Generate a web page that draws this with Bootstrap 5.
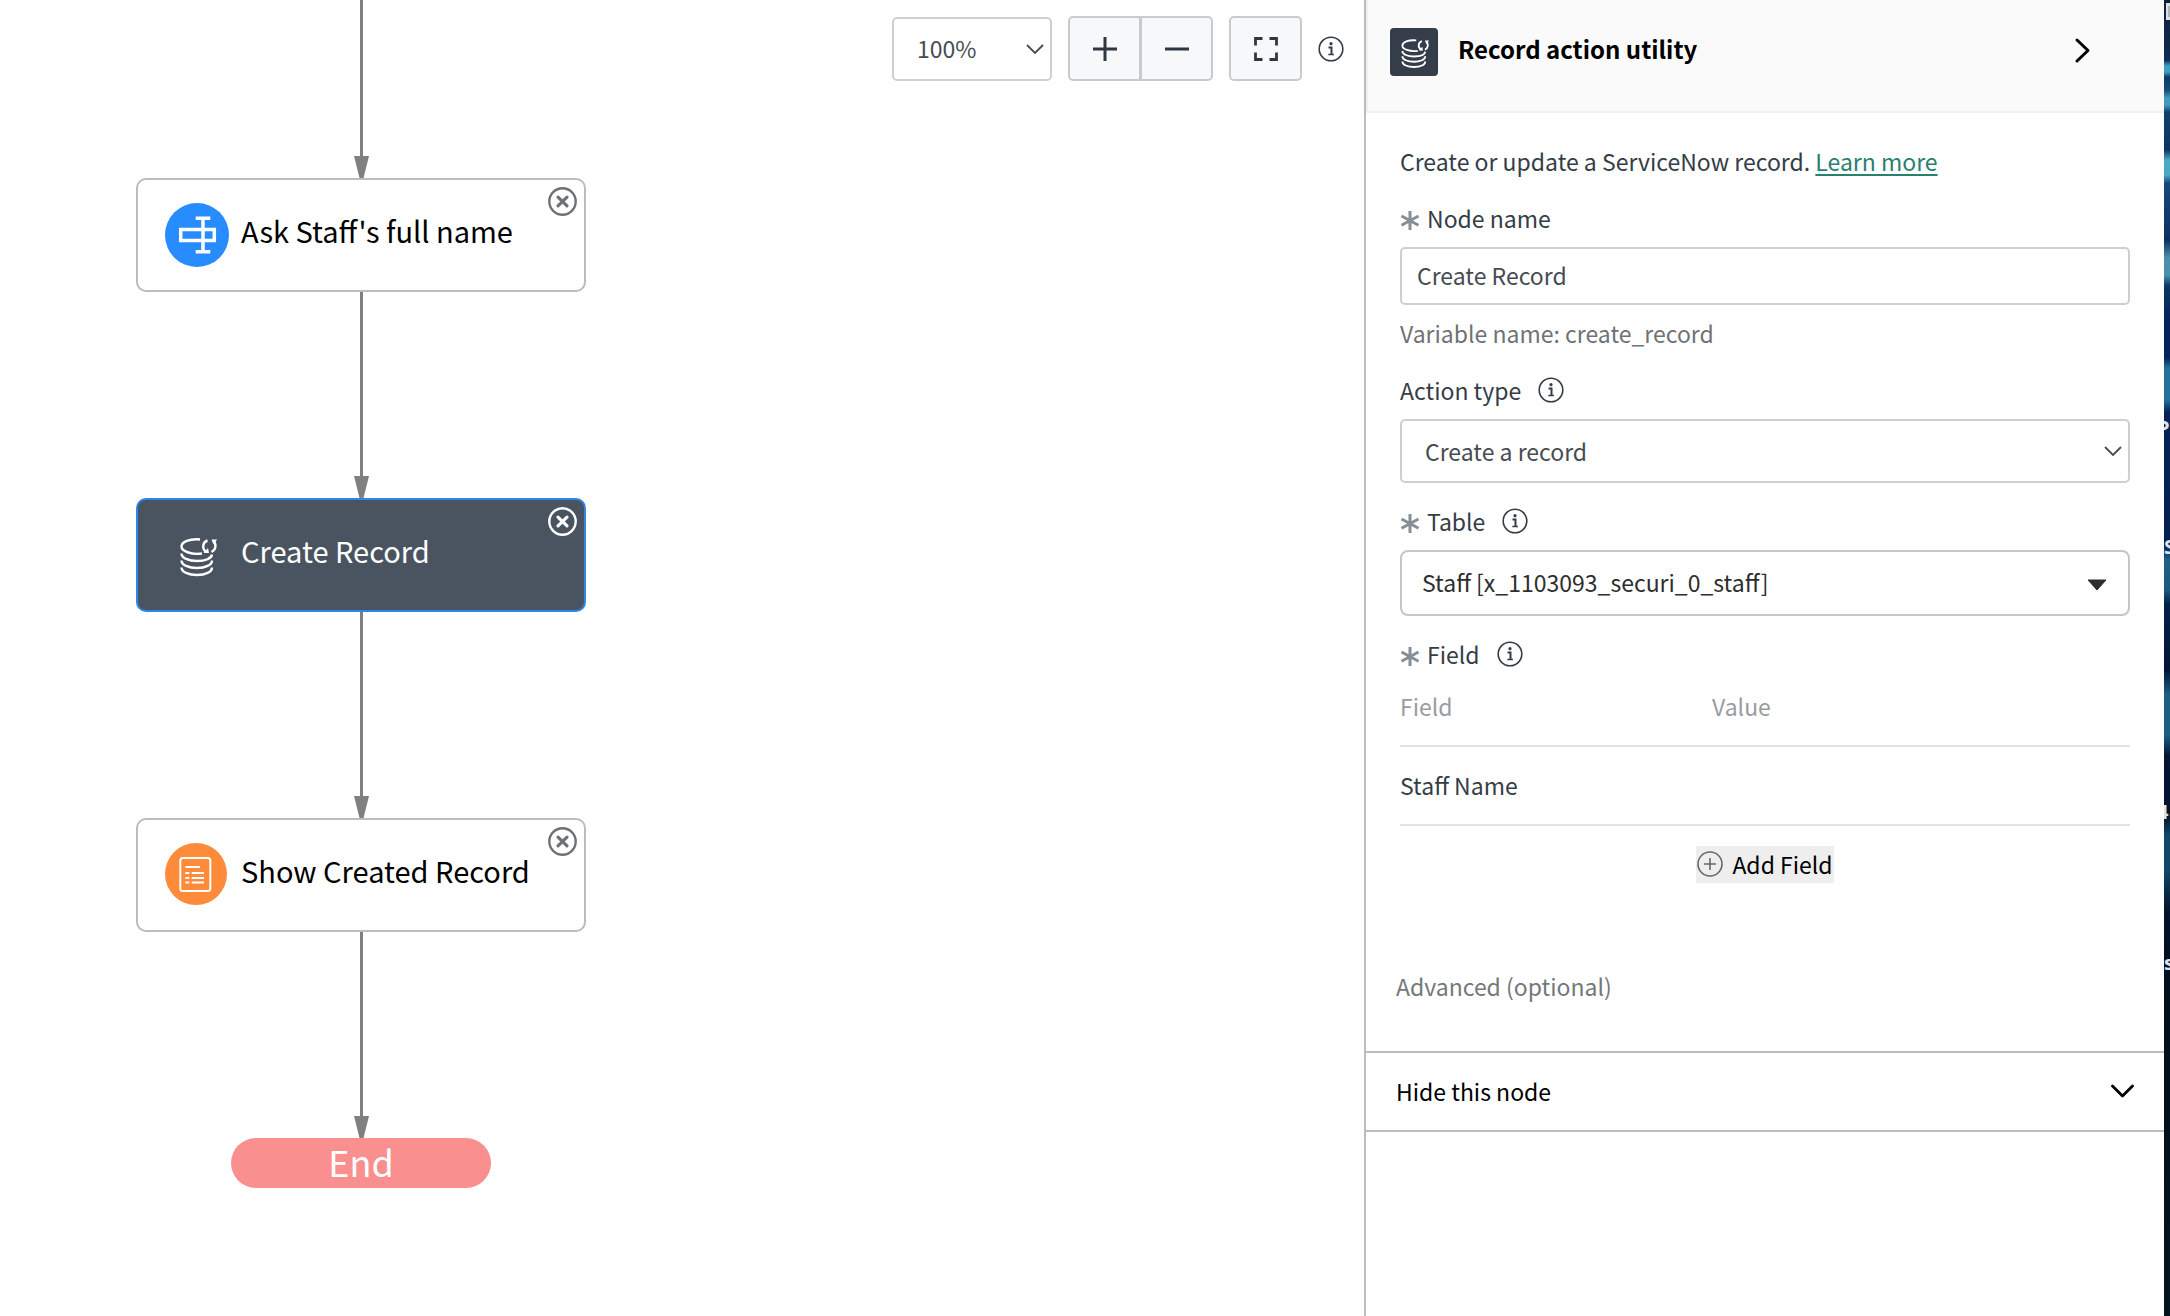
<!DOCTYPE html>
<html lang="en">
<head>
<meta charset="utf-8">
<meta name="viewport" content="width=device-width, initial-scale=1">
<title>Record action utility</title>
<link href="https://cdn.jsdelivr.net/npm/bootstrap@5.3.0/dist/css/bootstrap.min.css" rel="stylesheet">
<style>
  body { font-family: "Noto Sans CJK SC", "Noto Sans", sans-serif; font-size: 23px; line-height: 32px; color: #343d47; background: #fff; }
  svg { display: block; flex: none; }
  .btn { --bs-btn-font-size: 23px; --bs-btn-line-height: 32px; }

  /* flow canvas */
  .flow { margin-left: 136px; width: 450px; }
  .flow-link { height: 206px; color: #808080; }
  .flow-link.first { height: 178px; }
  .flow-line { width: 3px; background: #808080; }
  .flow-node { height: 114px; padding: 0 25px 0 27px; gap: 12px; border: 2px solid #bcbcbe; border-radius: 10px; background: #fff; color: #000; }
  .flow-node.active { background: #4a5461; border-color: #2e86e8; color: #fff; }
  .flow-label { font-size: 29px; line-height: 40px; padding-bottom: 10px; }
  .flow-close { top: 7px; right: 7px; color: #6e7277; }
  .active .flow-close { color: #fff; }
  .flow-end { width: 260px; height: 50px; border-radius: 25px; background: #fa8f8f; color: #fff; font-size: 36px; line-height: 46px; }

  /* toolbar */
  .tools { padding: 16px 20px 0 0; gap: 16px; }
  .tools .btn { --bs-btn-bg: #f7f8fa; --bs-btn-border-color: #c8cacd; --bs-btn-border-width: 2px; --bs-btn-border-radius: 5px; --bs-btn-color: #2f3842; width: 73px; height: 65px; }
  .tools .btn-group > .btn:not(:first-child) { margin-left: -1px; }
  .form-select, .form-control { border: 2px solid #cdd0d3; border-radius: 5px; color: #464c52; font-size: 23px; line-height: 32px; background-color: #fff; }
  .form-select { height: 64px; padding: 0 40px 1px 23px; background-size: 18px 12px; background-position: right 6px center;
    background-image: url("data:image/svg+xml,%3Csvg xmlns='http://www.w3.org/2000/svg' viewBox='0 0 18 12'%3E%3Cpath d='M1 2l8 8 8-8' fill='none' stroke='%23464c52' stroke-width='1.8'/%3E%3C/svg%3E"); }
  .zoom-select { width: 160px; }
  .name-input { height: 58px; padding: 0 15px 2px; }
  .table-select { height: 66px; padding: 0 50px 2px 20px; border-color: #c6c6c6; border-radius: 8px; color: #2e2e2e; background-size: 20px 12px; background-position: right 21px top 27px;
    background-image: url("data:image/svg+xml,%3Csvg xmlns='http://www.w3.org/2000/svg' viewBox='0 0 20 12'%3E%3Cpath d='M1 1h18l-9 10z' fill='%232e2e2e' stroke='%232e2e2e' stroke-linejoin='round'/%3E%3C/svg%3E"); }

  /* properties panel */
  .props { flex: 0 0 800px; border-left: 2px solid #bcbcbe; background: #fff; }
  .props-head { height: 113px; padding: 28px 64px 0 22px; border: solid #f0f0f1; border-width: 0 0 2px 2px; background: #fafafa; }
  .props-icon { width: 48px; height: 48px; border-radius: 4px; background: #343d49; color: #fff; }
  .props-title { font-size: 24px; line-height: 42px; margin: 0 0 0 20px; font-weight: 700; color: #000; }
  .props-body { padding: 32px 34px 0; }
  .name-row { margin: 25px 0 13px; }
  .label-row { margin: 22px 0 13px; }
  .star { color: #868e96; margin-right: 7px; }
  .info-btn { margin-left: 17px; color: inherit; }
  .hint { margin-top: 12px; color: #6f7275; }
  .doc-link, .doc-link:hover { color: #278070; text-underline-offset: 3px; text-decoration-thickness: 2px; }
  .field-grid { margin-top: 20px; }
  .field-grid th { padding: 0 0 23px; font-weight: 400; color: #9a9c9f; }
  .field-grid td { padding: 22px 0 23px; }
  .field-grid tr { border-bottom: 2px solid #e3e3e4; }
  .field-col { width: 312px; }
  .add-btn { height: 37px; margin-top: 20px; gap: 9px; padding: 0 1px 1px; background: #eee; color: #000; }
  .advanced { margin: 87px 30px 49px; color: #74777a; }
  .hide-row { padding: 22px 30px 23px; border: solid #bcbcbe; border-width: 2px 0; color: #000; background: #fff; }

  /* strip of desktop behind the window */
  .desk { flex: 0 0 6px; font: 700 20px/24px "Open Sans", sans-serif; color: #dfe4ea;
    background: linear-gradient(#0c2138 0, #0d2c50 60px, #3da0c3 66px, #3da0c3 72px, #123a66 77px, #174b76 90px, #3f9cbe 98px, #3f9cbe 105px, #11406c 112px, #0f3362 150px, #4ba9c6 160px, #4ba9c6 175px, #17487a 183px, #0c2f60 240px, #4a90ad 258px, #4a90ad 275px, #0d3664 286px, #04245a 320px, #04245a 358px, #23719c 368px, #23719c 400px, #042357 412px, #03204f 545px, #205f86 560px, #1d5980 590px, #032046 604px, #021634 670px, #1d5f80 695px, #1d5f80 735px, #021733 756px, #02132d 815px, #114867 835px, #114867 870px, #021228 912px, #020e1c 1000px, #04141c 100%); }
  .desk span { position: absolute; left: 0; }
  .desk .tail { left: -7px; }
  .desk-file { position: absolute; top: 3px; left: 2px; width: 4px; height: 17px; background: #aeb4b8; border: solid #dde1e3; border-width: 3px 0 3px 2px; }
</style>
</head>
<body>
<svg width="0" height="0" class="position-absolute" aria-hidden="true">
  <symbol id="i-record" viewBox="0 0 64 64">
    <g fill="none" stroke="currentColor" stroke-width="2.400">
      <path d="M35 16.500C24.500 15.500 16.500 19 16.500 23.500s9.500 8.500 20.500 7M16.500 30.500c0 4.500 7 7.500 15.500 7.500s14.500-2.500 15-6.500M16.500 37.500c0 4.500 7 7.500 15.500 7.500s15-3 15-7.500M16.500 44.500c0 4.500 7 7.500 15.500 7.500s15-3 15-7.500"/>
      <path d="M42.500 17.500c-5.500 2-5.500 9-1 11.500M46.500 29c5-2.500 5-8.500 1.500-11"/>
    </g>
    <path fill="currentColor" d="M46.500 16.500h5.500l-3 5zM38.500 30h5.500l-1-5z"/>
  </symbol>
  <symbol id="i-info" viewBox="0 0 26 26">
    <circle cx="13" cy="13" r="11.800" fill="none" stroke="currentColor" stroke-width="1.600"/>
    <circle cx="13" cy="7.700" r="1.600" fill="currentColor"/>
    <path fill="none" stroke="currentColor" stroke-width="2" d="M10.500 11.500h3v7"/>
    <path stroke="currentColor" stroke-width="1.500" d="M10.300 18.500h5.600"/>
  </symbol>
  <symbol id="i-star" viewBox="0 0 20 26">
    <path stroke="currentColor" stroke-width="3" d="M10 6v19M1.500 11l17 9.200M18.500 11l-17 9.200"/>
  </symbol>
  <symbol id="i-close" viewBox="0 0 29 29">
    <circle cx="14.500" cy="14.500" r="13.200" fill="none" stroke="currentColor" stroke-width="2.400"/>
    <path stroke="currentColor" stroke-width="3.200" stroke-linecap="round" d="M10 10.200l9 8.600M19 10.200l-9 8.600"/>
  </symbol>
  <symbol id="i-head" viewBox="0 0 15 22"><path fill="currentColor" d="M0 0h15L9.500 22h-4z"/></symbol>
</svg>

<div class="d-flex min-vh-100">
  <main class="d-flex flex-grow-1 justify-content-between align-items-start">
    <div class="flow d-flex flex-column align-items-center">
      <div class="flow-link first d-flex flex-column align-items-center"><div class="flow-line flex-grow-1"></div><svg width="15" height="22"><use href="#i-head"/></svg></div>
      <div class="flow-node w-100 d-flex align-items-center position-relative">
        <svg width="64" height="64" viewBox="0 0 64 64"><circle cx="32" cy="32" r="32" fill="#268cff"/><g fill="none" stroke="#fff" stroke-width="3.500"><path d="M15.700 26.400h33.600v11H15.700z"/><path d="M38 14v36M30.700 15.300h14.600M30.700 48.700h14.600"/></g></svg>
        <div class="flow-label">Ask Staff's full name</div>
        <button type="button" class="flow-close btn p-0 border-0 position-absolute" aria-label="Delete node"><svg width="29" height="29"><use href="#i-close"/></svg></button>
      </div>
      <div class="flow-link d-flex flex-column align-items-center"><div class="flow-line flex-grow-1"></div><svg width="15" height="22"><use href="#i-head"/></svg></div>
      <div class="flow-node active w-100 d-flex align-items-center position-relative">
        <svg width="64" height="64"><use href="#i-record"/></svg>
        <div class="flow-label">Create Record</div>
        <button type="button" class="flow-close btn p-0 border-0 position-absolute" aria-label="Delete node"><svg width="29" height="29"><use href="#i-close"/></svg></button>
      </div>
      <div class="flow-link d-flex flex-column align-items-center"><div class="flow-line flex-grow-1"></div><svg width="15" height="22"><use href="#i-head"/></svg></div>
      <div class="flow-node w-100 d-flex align-items-center position-relative">
        <svg width="64" height="64" viewBox="0 0 64 64"><circle cx="31" cy="31" r="31" fill="#fd8b3a"/><g fill="none" stroke="#fff" stroke-width="2"><rect x="15.300" y="15" width="30" height="33" rx="2.500"/><path d="M20.300 24H35M20.300 30h4M26.700 30H39M20.300 35h4M26.700 35H39M20.300 39.500h4M26.700 39.500H39"/></g></svg>
        <div class="flow-label">Show Created Record</div>
        <button type="button" class="flow-close btn p-0 border-0 position-absolute" aria-label="Delete node"><svg width="29" height="29"><use href="#i-close"/></svg></button>
      </div>
      <div class="flow-link d-flex flex-column align-items-center"><div class="flow-line flex-grow-1"></div><svg width="15" height="22"><use href="#i-head"/></svg></div>
      <div class="flow-end text-center">End</div>
    </div>

    <div class="tools d-flex align-items-center">
      <select class="form-select zoom-select" aria-label="Zoom level"><option>100%</option></select>
      <div class="btn-group" role="group" aria-label="Zoom">
        <button type="button" class="btn p-0 d-flex align-items-center justify-content-center" aria-label="Zoom in"><svg width="24" height="24"><path stroke="currentColor" stroke-width="3" d="M12 0v24M0 12h24"/></svg></button>
        <button type="button" class="btn p-0 d-flex align-items-center justify-content-center" aria-label="Zoom out"><svg width="24" height="24"><path stroke="currentColor" stroke-width="3" d="M0 12h24"/></svg></button>
      </div>
      <button type="button" class="btn p-0 d-flex align-items-center justify-content-center" aria-label="Full screen"><svg width="24" height="24"><path fill="none" stroke="currentColor" stroke-width="2.800" d="M1.500 8.500v-7h7M15.500 1.500h7v7M22.500 15.500v7h-7M8.500 22.500h-7v-7"/></svg></button>
      <svg width="26" height="26" role="img" aria-label="Help"><use href="#i-info"/></svg>
    </div>
  </main>

  <aside class="props">
    <header class="props-head d-flex align-items-start">
      <div class="props-icon"><svg width="48" height="48"><use href="#i-record"/></svg></div>
      <h1 class="props-title flex-grow-1">Record action utility</h1>
      <button type="button" class="btn p-0 border-0" aria-label="Collapse panel"><svg width="34" height="44"><path fill="none" stroke="#000" stroke-width="3" stroke-linecap="round" stroke-linejoin="round" d="M11 12l11 10.500L11 33"/></svg></button>
    </header>

    <form class="props-body">
      <div>Create or update a ServiceNow record. <a class="doc-link" href="#">Learn more</a></div>

      <div class="name-row d-flex align-items-center"><svg class="star" width="20" height="26"><use href="#i-star"/></svg><label for="nodeName">Node name</label></div>
      <input id="nodeName" class="form-control name-input" type="text" value="Create Record">
      <div class="hint">Variable name: create_record</div>

      <div class="name-row d-flex align-items-center"><label for="actionType">Action type</label><svg class="info-btn" width="26" height="26"><use href="#i-info"/></svg></div>
      <select id="actionType" class="form-select"><option>Create a record</option></select>

      <div class="label-row d-flex align-items-center"><svg class="star" width="20" height="26"><use href="#i-star"/></svg><label for="tableName">Table</label><svg class="info-btn" width="26" height="26"><use href="#i-info"/></svg></div>
      <select id="tableName" class="form-select table-select"><option>Staff [x_1103093_securi_0_staff]</option></select>

      <div class="label-row mb-0 d-flex align-items-center"><svg class="star" width="20" height="26"><use href="#i-star"/></svg><span id="fieldLabel">Field</span><svg class="info-btn" width="26" height="26"><use href="#i-info"/></svg></div>
      <table class="field-grid w-100" aria-labelledby="fieldLabel">
        <thead><tr><th class="field-col" scope="col">Field</th><th scope="col">Value</th></tr></thead>
        <tbody><tr><td>Staff Name</td><td></td></tr></tbody>
      </table>
      <button type="button" class="add-btn btn border-0 rounded-0 mx-auto d-flex align-items-center"><svg width="26" height="26" viewBox="0 0 26 26"><g fill="none" stroke="#64686c" stroke-width="1.600"><circle cx="13" cy="13" r="12"/><path d="M13 7v12M7 13h12"/></g></svg><span>Add Field</span></button>
    </form>

    <div class="advanced">Advanced (optional)</div>
    <button type="button" class="hide-row btn rounded-0 w-100 d-flex align-items-center justify-content-between"><span>Hide this node</span><svg width="23" height="14"><path fill="none" stroke="#000" stroke-width="2.800" stroke-linecap="round" stroke-linejoin="round" d="M1.500 2l10 10 10-10"/></svg></button>
  </aside>

  <div class="desk position-relative overflow-hidden" aria-hidden="true">
    <div class="desk-file"></div>
    <span class="tail" style="top:416px">P</span><span style="top:535px">S</span><span class="tail" style="top:800px">4</span><span style="top:951px">s</span>
  </div>
</div>
<script src="https://cdn.jsdelivr.net/npm/bootstrap@5.3.0/dist/js/bootstrap.bundle.min.js"></script>
</body>
</html>
